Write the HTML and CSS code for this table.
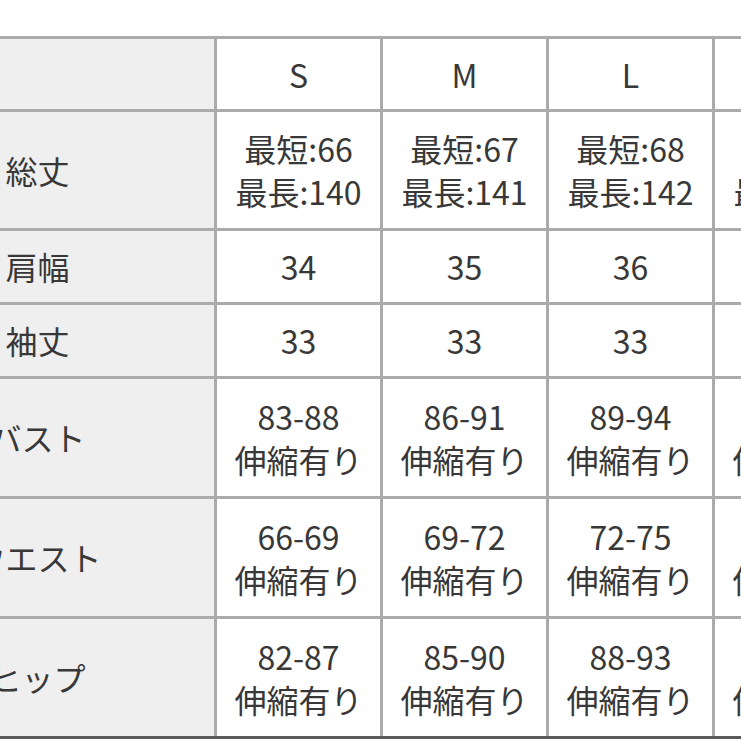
FILE: index.html
```html
<!DOCTYPE html>
<html lang="ja">
<head>
<meta charset="utf-8">
<title>サイズ表</title>
<link rel="stylesheet" href="styles.css">
</head>
<body>
<div class="sheet">
  <table class="size-table">
    <colgroup>
      <col class="col-label">
      <col class="col-size">
      <col class="col-size">
      <col class="col-size">
      <col class="col-size">
    </colgroup>
    <tr class="row-head">
      <td class="label"></td>
      <td>S</td>
      <td>M</td>
      <td>L</td>
      <td>LL</td>
    </tr>
    <tr class="row-first">
      <td class="label">総丈</td>
      <td>最短:66<br>最長:140</td>
      <td>最短:67<br>最長:141</td>
      <td>最短:68<br>最長:142</td>
      <td>最短:69<br>最長:143</td>
    </tr>
    <tr class="row-short">
      <td class="label">肩幅</td>
      <td>34</td>
      <td>35</td>
      <td>36</td>
      <td>37</td>
    </tr>
    <tr class="row-short">
      <td class="label">袖丈</td>
      <td>33</td>
      <td>33</td>
      <td>33</td>
      <td>33</td>
    </tr>
    <tr class="row-tall">
      <td class="label">バスト</td>
      <td>83-88<br>伸縮有り</td>
      <td>86-91<br>伸縮有り</td>
      <td>89-94<br>伸縮有り</td>
      <td>92-97<br>伸縮有り</td>
    </tr>
    <tr class="row-tall">
      <td class="label">ウエスト</td>
      <td>66-69<br>伸縮有り</td>
      <td>69-72<br>伸縮有り</td>
      <td>72-75<br>伸縮有り</td>
      <td>75-78<br>伸縮有り</td>
    </tr>
    <tr class="row-tall row-last">
      <td class="label">ヒップ</td>
      <td>82-87<br>伸縮有り</td>
      <td>85-90<br>伸縮有り</td>
      <td>88-93<br>伸縮有り</td>
      <td>91-96<br>伸縮有り</td>
    </tr>
  </table>
</div>
</body>
</html>
```
FILE: styles.css
```css
html, body {
  margin: 0;
  padding: 0;
  background: #ffffff;
  overflow: hidden;
  width: 741px;
  height: 741px;
}

.sheet {
  padding-top: 36px;
  margin-left: -142px;
}

.size-table {
  border-collapse: collapse;
  table-layout: fixed;
  width: 1020px;
  font-family: "Noto Sans CJK JP", "Noto Sans", sans-serif;
  font-size: 32px;
  line-height: 43px;
  color: #383838;
}

.col-label {
  width: 356px;
}

.col-size {
  width: 166px;
}

.size-table td {
  border: 3px solid #ababab;
  text-align: center;
  vertical-align: middle;
  padding: 0;
  background: #ffffff;
}

.size-table td.label {
  background: #efefef;
}

.row-head td {
  height: 70px;
}

.row-first td {
  height: 116px;
}

.row-tall td {
  height: 117px;
}

.row-short td {
  height: 71px;
}

.row-last td {
  border-bottom-color: #5a5a5a;
}
```
